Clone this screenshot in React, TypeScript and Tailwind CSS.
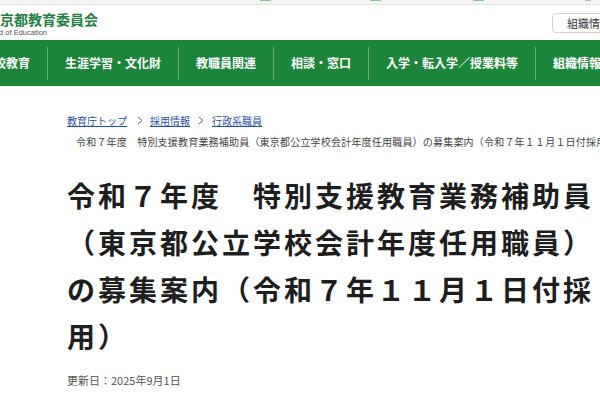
import React from "react";

function Chevron({ className }: { className?: string }) {
  return (
    <svg width="6" height="9" viewBox="0 0 6 9" className={className} fill="none">
      <path d="M1 1 L5 4.5 L1 8" stroke="#666" strokeWidth="1" />
    </svg>
  );
}

export default function App() {
  const navItems = ["学校教育", "生涯学習・文化財", "教職員関連", "相談・窓口", "入学・転入学／授業料等", "組織情報"];
  return (
    <div className="w-[600px] h-[400px] overflow-hidden bg-white font-['Noto_Sans_CJK_JP','Noto_Sans',sans-serif] text-[#222]">
      {/* top strip */}
      <div className="h-[5px] bg-[#f4f4f4] border-b border-[#e4e4e4] flex items-start">
        <div className="ml-[260px] w-[11px] h-[1px] bg-[#8fc39d]" />
        <div className="ml-[99px] w-[11px] h-[1px] bg-[#8fc39d]" />
        <div className="ml-[92px] w-[11px] h-[1px] bg-[#8fc39d]" />
        <div className="ml-[101px] w-[6px] h-[1px] bg-[#bbbbbb]" />
      </div>

      {/* header */}
      <div className="h-[35px] flex items-start">
        <div className="w-[98px] shrink-0 pt-[5px]">
          <div className="flex justify-end whitespace-nowrap text-[14px] leading-[18px] font-bold text-[#23803f]">
            東京都教育委員会
          </div>
          <div className="w-[47px] flex justify-end whitespace-nowrap text-[7.5px] leading-[9px] text-[#555] font-['Liberation_Sans',sans-serif]">
            Tokyo Metropolitan Board of Education
          </div>
        </div>
        <div className="ml-[454px] mt-[8px] shrink-0 w-[90px] h-[20px] rounded-[4px] border border-[#d2d2d2] flex items-center pl-[14px] text-[11px] text-[#333] whitespace-nowrap">
          組織情報
        </div>
      </div>

      {/* nav */}
      <div className="h-[46px] bg-[#1b8639] flex items-center whitespace-nowrap">
        <div className="-ml-[35px] flex items-center shrink-0">
          {navItems.map((t, i) => (
            <React.Fragment key={t}>
              {i > 0 && <div className="w-[1px] h-[33px] bg-[#ffffff]/35 shrink-0" />}
              <div className="px-[17px] text-[12px] font-bold text-white shrink-0">{t}</div>
            </React.Fragment>
          ))}
        </div>
      </div>

      {/* main */}
      <div className="pl-[67px] pt-[24px]">
        <div className="flex items-center h-[21px] text-[10px] whitespace-nowrap">
          <span className="text-[#1f4fa8] underline">教育庁トップ</span>
          <Chevron className="ml-[10px] mr-[7px]" />
          <span className="text-[#1f4fa8] underline">採用情報</span>
          <Chevron className="ml-[8px] mr-[8px]" />
          <span className="text-[#1f4fa8] underline">行政系職員</span>
        </div>
        <div className="flex items-center h-[21px] text-[10px] tracking-[0.2px] whitespace-nowrap text-[#444]">
          <Chevron className="mr-[9px]" />
          <span>令和７年度　特別支援教育業務補助員（東京都公立学校会計年度任用職員）の募集案内（令和７年１１月１日付採用）</span>
        </div>

        <h1 className="mt-[20px] w-[540px] text-[28px] leading-[47px] font-bold tracking-[3px] text-[#1e1e1e]">
          令和７年度　特別支援教育業務補助員（東京都公立学校会計年度任用職員）の募集案内（令和７年１１月１日付採用）
        </h1>

        <div className="mt-[12px] text-[11px] leading-[16px] text-[#555]">更新日：2025年9月1日</div>
      </div>
    </div>
  );
}
